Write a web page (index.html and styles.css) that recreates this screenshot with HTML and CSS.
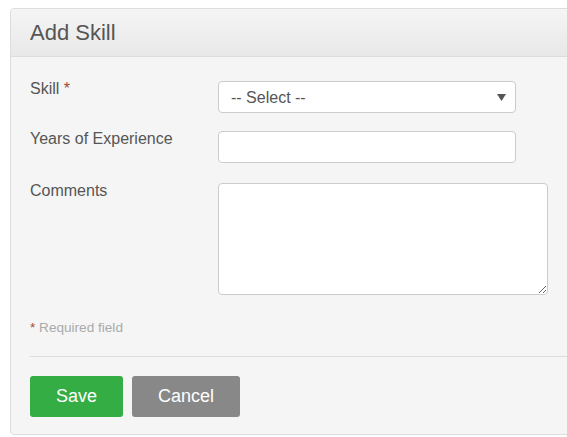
FILE: index.html
```html
<!DOCTYPE html>
<html>
<head>
<meta charset="utf-8">
<link rel="stylesheet" href="styles.css">
</head>
<body>
<div class="panel">
  <div class="panel-heading">Add Skill</div>
  <div class="panel-body">
    <form class="form">
      <div class="row">
        <label class="label">Skill <span class="req">*</span></label>
        <div class="control select-wrap">
          <select class="input select"><option>-- Select --</option></select>
          <svg class="caret" width="9" height="7" viewBox="0 0 9 7"><path d="M0 0H9L4.5 7Z" fill="#555"/></svg>
        </div>
      </div>
      <div class="row">
        <label class="label">Years of Experience</label>
        <div class="control"><input class="input text" type="text"></div>
      </div>
      <div class="row row-last">
        <label class="label">Comments</label>
        <div class="control"><textarea class="input area"></textarea></div>
      </div>
      <p class="note"><span class="req">*</span> Required field</p>
      <hr class="divider">
      <div class="actions">
        <button type="button" class="btn btn-save">Save</button>
        <button type="button" class="btn btn-cancel">Cancel</button>
      </div>
    </form>
  </div>
</div>
</body>
</html>
```
FILE: styles.css
```css
html, body {
  margin: 0;
  padding: 0;
  background: #fff;
  overflow: hidden;
}
body {
  padding: 8px 0 0 10px;
  font-family: "Liberation Sans", Arial, sans-serif;
  color: #555;
}
.panel {
  width: 600px;
  height: 427px;
  box-sizing: border-box;
  border: 1px solid #ddd;
  border-radius: 4px;
  background: #f5f5f5;
  overflow: hidden;
}
.panel-heading {
  height: 47px;
  padding: 0 19px;
  line-height: 47px;
  font-size: 22px;
  color: #555;
  background: linear-gradient(#f5f5f5, #e8e8e8);
  border-bottom: 1px solid #ddd;
}
.panel-body {
  padding: 20px 0 0 19px;
}
.row {
  display: grid;
  grid-template-columns: 188px 1fr;
  margin-bottom: 14px;
}
.row-last {
  margin-top: 16px;
  margin-bottom: 0;
}
.label {
  padding-top: 2px;
  font-size: 16px;
  line-height: 20px;
  color: #555;
}
.req {
  color: #a5492e;
}
.control {
  padding-top: 4px;
}
.select-wrap {
  position: relative;
  width: 298px;
}
.input {
  box-sizing: border-box;
  display: block;
  border: 1px solid #ccc;
  border-radius: 4px;
  background: #fff;
  font-family: "Liberation Sans", Arial, sans-serif;
  font-size: 16px;
  color: #555;
  margin: 0;
  outline: none;
}
.select {
  appearance: none;
  -webkit-appearance: none;
  width: 298px;
  height: 32px;
  padding: 0 12px;
}
.caret {
  position: absolute;
  right: 10px;
  top: 17px;
}
.text {
  width: 298px;
  height: 32px;
  padding: 0 12px;
}
.area {
  width: 330px;
  height: 112px;
  padding: 6px 12px;
  resize: both;
}
.note {
  margin: 23px 0 0;
  font-size: 13.6px;
  line-height: 20px;
  color: #aaa;
}
.divider {
  margin: 18px 0 0;
  border: 0;
  border-top: 1px solid #ddd;
  height: 0;
}
.actions {
  display: flex;
  gap: 9px;
  padding-top: 19px;
}
.btn {
  height: 41px;
  padding: 0 26px;
  border: 0;
  border-radius: 3px;
  font-family: "Liberation Sans", Arial, sans-serif;
  font-size: 18px;
  color: #fff;
}
.btn-save {
  background: #34ad44;
}
.btn-cancel {
  background: #888;
}
```
